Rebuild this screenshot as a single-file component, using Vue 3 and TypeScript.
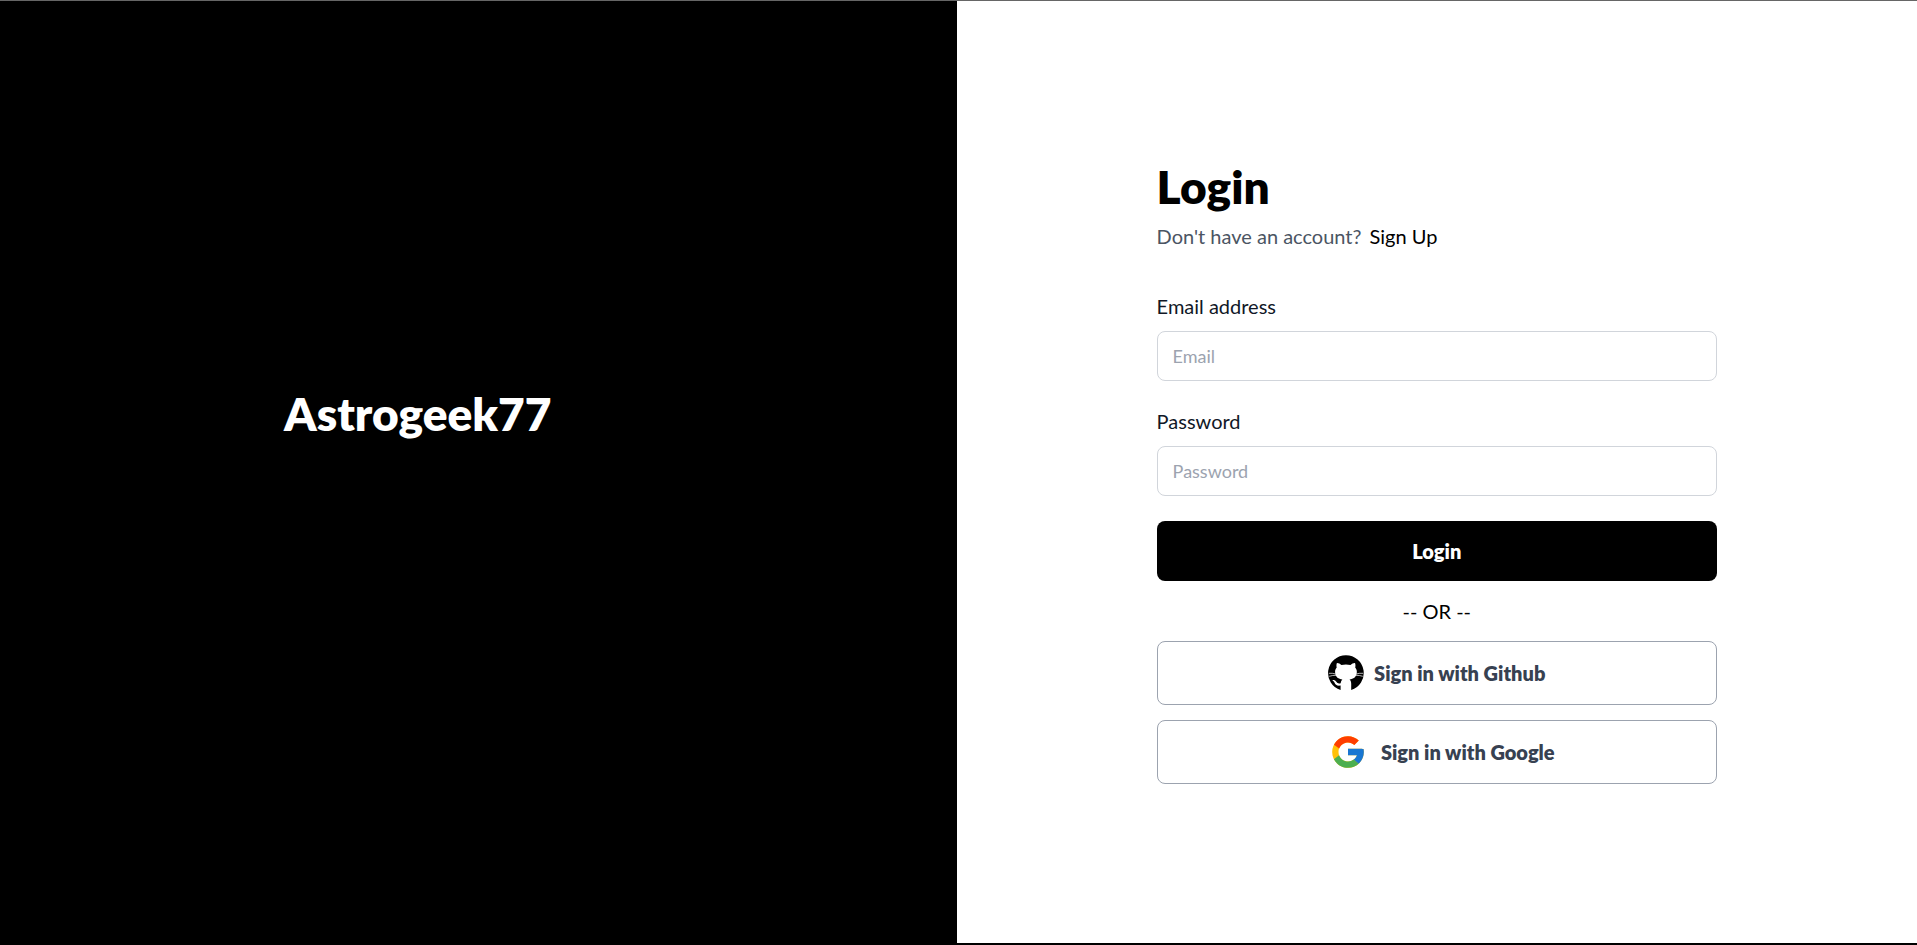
<script setup lang="ts">
import { ref } from 'vue'

const email = ref('')
const password = ref('')
</script>

<template>
  <div class="page">
    <aside class="brand">
      <h1 class="brand-name">Astrogeek77</h1>
    </aside>
    <main class="panel">
      <div class="card">
        <h2 class="title">Login</h2>
        <p class="subtitle">
          <span>Don't have an account?</span>
          <a class="signup" href="#">Sign Up</a>
        </p>
        <form class="form" @submit.prevent>
          <div class="field">
            <label for="email">Email address</label>
            <input id="email" v-model="email" type="email" placeholder="Email" />
          </div>
          <div class="field">
            <label for="password">Password</label>
            <input id="password" v-model="password" type="password" placeholder="Password" />
          </div>
          <button class="submit" type="submit">Login</button>
        </form>
        <p class="divider">-- OR --</p>
        <div class="providers">
          <button class="provider" type="button">
            <svg class="github-icon" viewBox="0 0 36 36" aria-hidden="true">
              <path
                fill="#000"
                d="M18 .2A17.8 17.8 0 0 0 12.6 35v-4.4c-3.8.5-5.2-.8-6-2.8-.4-1-1-1.6-1.8-2.1-.6-.5 0-.9.8-.8 1.500.2 2.300 1.200 3 2.200 1 1.500 2.300 1.600 4.100 1.100.2-1.700.8-2.900 1.700-3.700-4-.5-6.700-2.300-7.200-6.200-.4-2.800.2-4.300 1.500-5.900-.4-1.500-.3-3 .2-4.300 1.700-.1 3.100.8 4.500 1.800 3.100-.7 6-.7 9.100 0 1.400-1 2.800-1.900 4.500-1.800.5 1.300.6 2.800.2 4.300 1.300 1.600 1.900 3.100 1.500 5.900-.5 3.900-3.200 5.700-7.200 6.200 1.200 1 1.700 2.400 1.700 4.200V35A17.800 17.800 0 0 0 18 .2z"
              />
              <path
                fill="none"
                stroke="#fff"
                stroke-width=".7"
                d="M.8 18.300q3.500-.3 7 .7M1.200 21.300q3.400-1.100 7-1M35.200 18.300q-3.500-.3-7 .7M34.800 21.300q-3.400-1.100-7-1"
              />
            </svg>
            <span>Sign in with Github</span>
          </button>
          <button class="provider" type="button">
            <svg class="google-icon" viewBox="0 0 48 48" aria-hidden="true">
              <path fill="#FFC107" d="M43.611 20.083H42V20H24v8h11.303c-1.649 4.657-6.080 8-11.303 8-6.627 0-12-5.373-12-12s5.373-12 12-12c3.059 0 5.842 1.154 7.961 3.039l5.657-5.657C34.046 6.053 29.268 4 24 4 12.955 4 4 12.955 4 24s8.955 20 20 20 20-8.955 20-20c0-1.341-.138-2.650-.389-3.917z" />
              <path fill="#FF3D00" d="M6.306 14.691l6.571 4.819C14.655 15.108 18.961 12 24 12c3.059 0 5.842 1.154 7.961 3.039l5.657-5.657C34.046 6.053 29.268 4 24 4 16.318 4 9.656 8.337 6.306 14.691z" />
              <path fill="#4CAF50" d="M24 44c5.166 0 9.860-1.977 13.409-5.192l-6.190-5.238C29.211 35.091 26.715 36 24 36c-5.202 0-9.619-3.317-11.283-7.946l-6.522 5.025C9.505 39.556 16.227 44 24 44z" />
              <path fill="#1976D2" d="M43.611 20.083H42V20H24v8h11.303c-.792 2.237-2.231 4.166-4.087 5.571l6.193 5.238C36.971 39.205 44 34 44 24c0-1.341-.138-2.650-.389-3.917z" />
            </svg>
            <span>Sign in with Google</span>
          </button>
        </div>
      </div>
    </main>
  </div>
</template>

<style>
body {
  margin: 0;
}
</style>

<style scoped>
.page {
  display: grid;
  grid-template-columns: calc(50% - 2px) 1fr;
  min-height: 100vh;
  box-sizing: border-box;
  border-top: 1px solid #666;
  border-bottom: 2px solid #000;
  background: #fff;
  color: #000;
  font-family: Lato, 'Liberation Sans', sans-serif;
  font-size: 20px;
  line-height: 30px;
}

.page * {
  box-sizing: border-box;
}

h1,
h2,
p {
  margin: 0;
}

.brand {
  display: flex;
  flex-direction: column;
  padding: 383px 40px 0 284px;
  background: #000;
  color: #fff;
}

.brand-name {
  font-size: 46px;
  font-weight: 800;
  line-height: 60px;
}

.panel {
  display: flex;
  flex-direction: column;
  align-items: center;
  justify-content: center;
  padding-bottom: 4px;
}

.card {
  width: calc(100% * 7 / 12);
}

.title {
  font-size: 46px;
  font-weight: 800;
  line-height: 60px;
}

.subtitle {
  display: flex;
  gap: 8px;
  margin-top: 4px;
  color: #4b5563;
}

.signup {
  color: #000;
  text-decoration: none;
}

.form {
  display: flex;
  flex-direction: column;
  gap: 25px;
  margin-top: 40px;
}

.field {
  display: flex;
  flex-direction: column;
  gap: 10px;
  color: #111827;
}

input {
  width: 100%;
  height: 50px;
  padding: 0 15px;
  border: 1px solid #d1d5db;
  border-radius: 8px;
  background: #fff;
  color: #111827;
  font: inherit;
  font-size: 18px;
}

input::placeholder {
  color: #9ca3af;
  opacity: 1;
}

button {
  font: inherit;
  font-weight: 800;
  cursor: pointer;
}

.submit {
  height: 60px;
  border: 0;
  border-radius: 8px;
  background: #000;
  color: #fff;
}

.divider {
  margin: 15px 0;
  text-align: center;
}

.providers {
  display: flex;
  flex-direction: column;
  gap: 15px;
}

.provider {
  display: flex;
  align-items: center;
  justify-content: center;
  gap: 10px;
  height: 64px;
  padding: 0 20px;
  border: 1px solid #9ca3af;
  border-radius: 8px;
  background: #fff;
  color: #374151;
}

.github-icon {
  width: 36px;
  height: 36px;
}

.google-icon {
  width: 38px;
  height: 38px;
  margin: 0 4px 0 10px;
}
</style>
